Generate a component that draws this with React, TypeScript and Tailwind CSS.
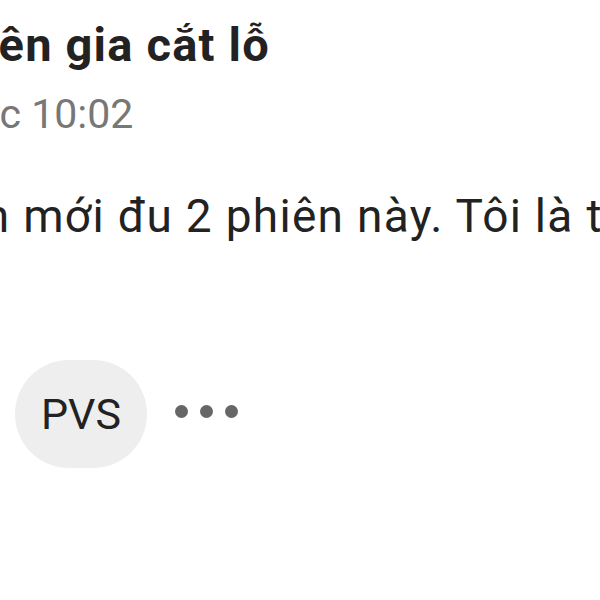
export default function App() {
  return (
    <div className="w-[600px] h-[600px] overflow-hidden bg-white font-['Roboto',sans-serif] text-[#222222]">
      <div className="pt-[15px] ml-[-113px] whitespace-nowrap text-[47px] leading-[60px] font-bold tracking-[1.2px]">
        Chuyên gia cắt lỗ
      </div>
      <div className="mt-[14px] ml-[-33px] whitespace-nowrap text-[41px] leading-[50px] text-[#777777]">
        lúc 10:02
      </div>
      <div className="mt-[49px] ml-[-97px] whitespace-nowrap text-[46px] leading-[56px] tracking-[1.3px]">
        Mình mới đu 2 phiên này. Tôi là thành viên mới
      </div>
      <div className="mt-[116px] ml-[15px] flex items-start gap-[28px]">
        <div className="flex h-[108px] w-[132px] items-center justify-center rounded-full bg-[#eeeeee] text-[43px] text-[#222222]">
          PVS
        </div>
        <div className="mt-[45px] flex items-center gap-[12px]">
          <span className="h-[13px] w-[13px] rounded-full bg-[#666666]" />
          <span className="h-[13px] w-[13px] rounded-full bg-[#666666]" />
          <span className="h-[13px] w-[13px] rounded-full bg-[#666666]" />
        </div>
      </div>
    </div>
  );
}
